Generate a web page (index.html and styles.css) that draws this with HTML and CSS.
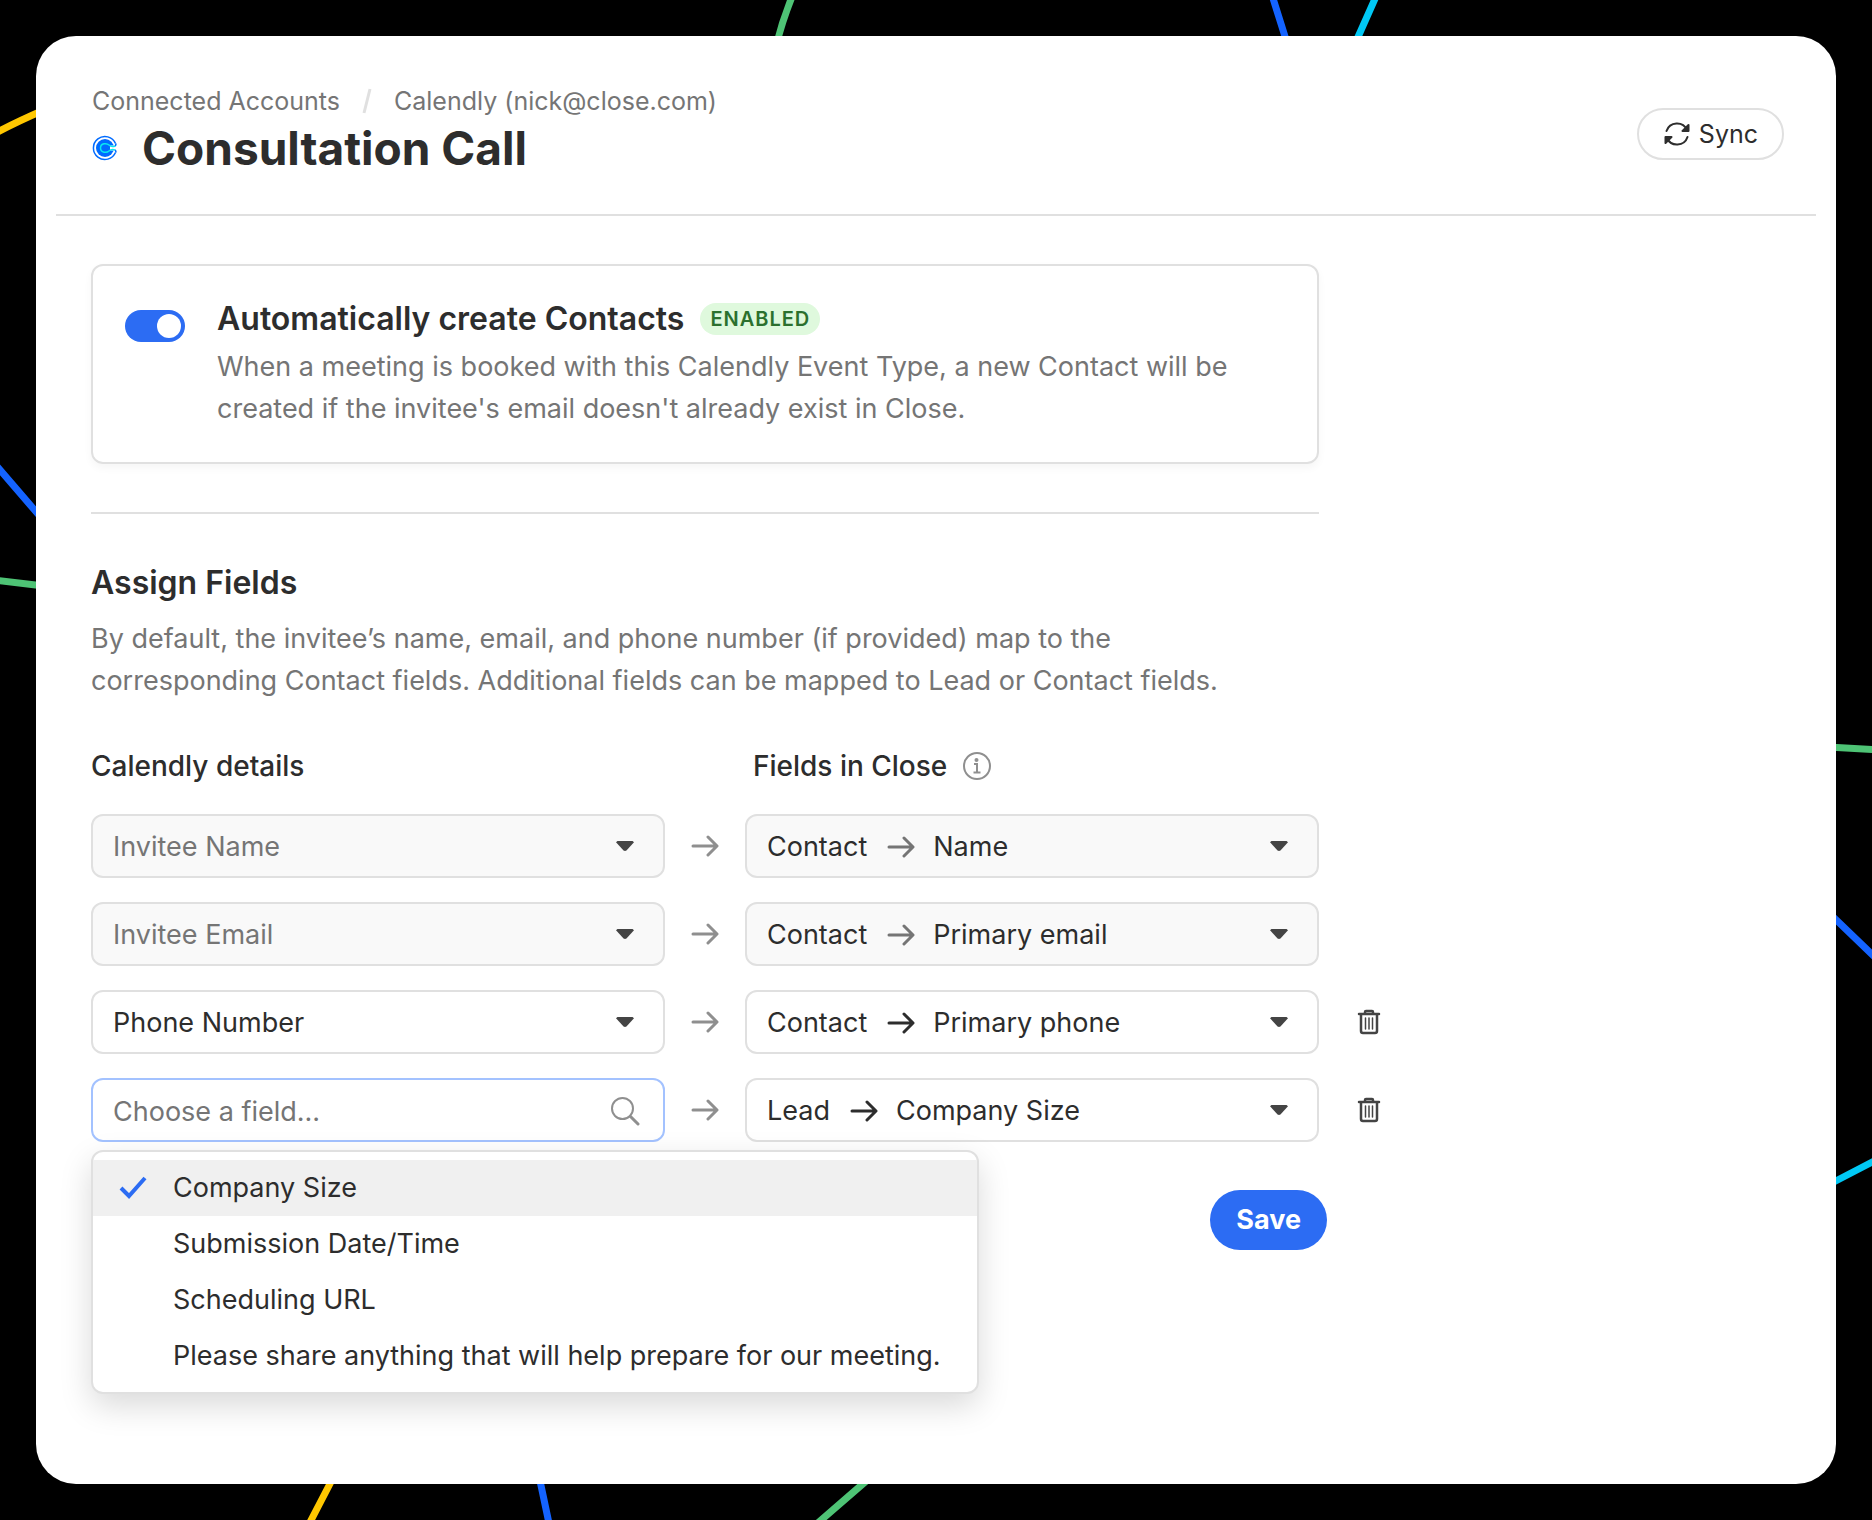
FILE: index.html
```html
<!DOCTYPE html>
<html lang="en">
<head>
    <meta charset="UTF-8">
    <meta name="viewport" content="width=device-width, initial-scale=1.0">
    <title>Consultation Call</title>
    <link rel="stylesheet" href="styles.css">
</head>
<body>
    <svg class="backdrop" viewBox="0 0 1872 1520" preserveAspectRatio="none" aria-hidden="true">
        <g fill="none" stroke-width="7">
            <path stroke="#ffc700" d="M-6 134Q14 123 44 110M334 1476L307 1528"/>
            <path stroke="#1463ff" d="M-6 463L44 521M1271 -8L1288 46M1828 912L1880 962M539 1476L550 1528"/>
            <path stroke="#4ec375" d="M-6 580L44 586M794 -8Q783 18 776 46M1828 747L1880 750M872 1476L812 1528"/>
            <path stroke="#00c8f5" d="M1378 -8L1354 46M1828 1185L1880 1158"/>
        </g>
    </svg>

    <svg width="0" height="0" class="sprite" aria-hidden="true">
        <symbol id="arrow" viewBox="0 0 28 28">
            <path d="M2 14H25M17 5L26 14L17 23" fill="none" stroke="currentColor" stroke-width="3" stroke-linecap="round" stroke-linejoin="round"/>
        </symbol>
        <symbol id="trash" viewBox="0 0 24 26">
            <g fill="none" stroke="currentColor" stroke-linecap="round" stroke-linejoin="round">
                <path stroke-width="2.500" d="M2 5H22M8 5V3Q8 2 9 2H15Q16 2 16 3V5M4 5V22Q4 24 6 24H18Q20 24 20 22V5"/>
                <path stroke-width="1.500" d="M8.500 9V20M12 9V20M15.500 9V20"/>
            </g>
        </symbol>
    </svg>

    <div class="window">
        <header class="header">
            <div>
                <nav class="breadcrumb">
                    <a href="#">Connected Accounts</a>
                    <svg width="10" height="28" viewBox="0 0 10 28"><path d="M8 2L2 26" stroke="#e0e0e0" stroke-width="3"/></svg>
                    <a href="#">Calendly (nick@close.com)</a>
                </nav>
                <div class="title">
                    <svg width="26" height="26" viewBox="0 0 26 26" fill="none">
                        <circle cx="13" cy="13" r="9" fill="#006bff"/>
                        <path d="M23.500 8.500A11.500 11.500 0 1 0 23.500 17.500" stroke="#006bff" stroke-width="1.500"/>
                        <path d="M18 10.500H25V15.500H18Z" fill="#fff"/>
                        <path d="M23.500 10.800C20 12.500 18.500 11.500 17 10C15 8 8.500 7.800 8.500 13S15 18 17 16C18.500 14.500 20 13.500 23.500 15.200" stroke="#0ae8f0" stroke-width="1.500"/>
                        <path d="M23.500 8.500Q24.500 10 23 10.800M23.500 17.500Q24.500 16 23 15.200" stroke="#006bff" stroke-width="1.500"/>
                    </svg>
                    <h1>Consultation Call</h1>
                </div>
            </div>
            <button class="sync" type="button">
                <svg width="28" height="26" viewBox="0 0 28 26" fill="none" stroke="currentColor" stroke-width="2" stroke-linecap="round">
                    <path d="M3.500 10A11 11 0 0 1 24 9M24.500 16A11 11 0 0 1 4 17"/>
                    <path fill="currentColor" stroke-linejoin="round" d="M25.500 4V10H19.500ZM2.500 22V16H8.500Z"/>
                </svg>
                Sync
            </button>
        </header>

        <main class="content">
            <section class="card">
                <input class="toggle" type="checkbox" id="auto-create" checked>
                <div>
                    <div class="card-title">
                        <h2><label for="auto-create">Automatically create Contacts</label></h2>
                        <span class="badge">ENABLED</span>
                    </div>
                    <p>When a meeting is booked with this Calendly Event Type, a new Contact will be created if the invitee's email doesn't already exist in Close.</p>
                </div>
            </section>

            <section class="assign">
                <h2>Assign Fields</h2>
                <p>By default, the invitee’s name, email, and phone number (if provided) map to the corresponding Contact fields. Additional fields can be mapped to Lead or Contact fields.</p>
            </section>

            <form>
                <div class="mapping">
                    <h3 id="calendly-details">Calendly details</h3>
                    <h3 class="close-fields" id="close-fields">
                        Fields in Close
                        <svg width="28" height="28" viewBox="0 0 28 28" fill="none" stroke="#8f8f8f" stroke-width="2">
                            <circle cx="14" cy="14" r="13"/>
                            <path d="M11 12H14V20M10.500 20.500H17.500"/>
                            <circle cx="13.500" cy="8" r="2" fill="#8f8f8f" stroke="none"/>
                        </svg>
                    </h3>

                    <div class="field disabled muted">
                        <select aria-labelledby="calendly-details" disabled><option>Invitee Name</option></select>
                    </div>
                    <svg class="maps-to"><use href="#arrow"/></svg>
                    <div class="field disabled">
                        <label for="field-name">Contact <svg class="arrow"><use href="#arrow"/></svg></label>
                        <select id="field-name" disabled><option>Name</option></select>
                    </div>

                    <div class="field disabled muted">
                        <select aria-labelledby="calendly-details" disabled><option>Invitee Email</option></select>
                    </div>
                    <svg class="maps-to"><use href="#arrow"/></svg>
                    <div class="field disabled">
                        <label for="field-email">Contact <svg class="arrow"><use href="#arrow"/></svg></label>
                        <select id="field-email" disabled><option>Primary email</option></select>
                    </div>

                    <div class="field">
                        <select aria-labelledby="calendly-details"><option>Phone Number</option></select>
                    </div>
                    <svg class="maps-to"><use href="#arrow"/></svg>
                    <div class="field">
                        <label for="field-phone">Contact <svg class="arrow"><use href="#arrow"/></svg></label>
                        <select id="field-phone"><option>Primary phone</option></select>
                    </div>
                    <button class="remove" type="button" aria-label="Remove"><svg width="24" height="26"><use href="#trash"/></svg></button>

                    <div class="field search">
                        <input type="text" placeholder="Choose a field..." aria-labelledby="calendly-details" aria-controls="options">
                        <svg width="30" height="30" viewBox="0 0 30 30" fill="none" stroke="#8f8f8f" stroke-width="2" stroke-linecap="round">
                            <circle cx="12.500" cy="12.500" r="10.500"/>
                            <path stroke-width="3" d="M20.500 20.500L28 28"/>
                        </svg>
                        <ul class="options" id="options" role="listbox">
                            <li role="option" aria-selected="true">
                                <svg width="28" height="28" viewBox="0 0 28 28"><path d="M2 14L10 22L26 4" fill="none" stroke="#2c6cf3" stroke-width="4"/></svg>
                                Company Size
                            </li>
                            <li role="option">Submission Date/Time</li>
                            <li role="option">Scheduling URL</li>
                            <li role="option">Please share anything that will help prepare for our meeting.</li>
                        </ul>
                    </div>
                    <svg class="maps-to"><use href="#arrow"/></svg>
                    <div class="field">
                        <label for="field-size">Lead <svg class="arrow"><use href="#arrow"/></svg></label>
                        <select id="field-size"><option>Company Size</option></select>
                    </div>
                    <button class="remove" type="button" aria-label="Remove"><svg width="24" height="26"><use href="#trash"/></svg></button>
                </div>
                <div class="actions">
                    <button class="save" type="submit">Save</button>
                </div>
            </form>
        </main>
    </div>
</body>
</html>
```

FILE: styles.css
```css
* {
    box-sizing: border-box;
    margin: 0;
    padding: 0;
}
body {
    position: relative;
    min-height: 100vh;
    padding: 36px;
    background: #000;
    color: #2d2d2d;
    font: 27px/42px Inter, "Liberation Sans", sans-serif;
}
input, select, button {
    font: inherit;
    color: inherit;
}
svg {
    flex: none;
    display: block;
}
.backdrop {
    position: absolute;
    top: 0;
    left: 0;
    width: 100%;
    height: 100%;
}
.sprite {
    position: absolute;
}
.window {
    position: relative;
    min-height: calc(100vh - 72px);
    background: #fff;
    border-radius: 40px;
}

/* header */
.header {
    display: flex;
    justify-content: space-between;
    align-items: flex-start;
    margin: 0 20px;
    padding: 44px 32px 40px 36px;
    border-bottom: 2px solid #e0e0e0;
}
.breadcrumb {
    display: flex;
    align-items: center;
    gap: 22px;
    font-size: 25px;
    line-height: 42px;
}
.breadcrumb a {
    color: #757575;
    text-decoration: none;
}
.title {
    display: flex;
    align-items: center;
    gap: 24px;
}
h1 {
    font-size: 46px;
    line-height: 52px;
    font-weight: 700;
}
.sync {
    display: flex;
    align-items: center;
    gap: 8px;
    height: 52px;
    margin-top: 28px;
    padding: 0 24px;
    background: #fff;
    border: 2px solid #e0e0e0;
    border-radius: 26px;
    font-size: 25px;
}

/* content */
.content {
    padding: 48px 55px;
}
h2 {
    font-size: 32px;
    line-height: 50px;
    font-weight: 600;
}
p {
    color: #757575;
}
.card {
    display: flex;
    align-items: flex-start;
    gap: 32px;
    max-width: 1228px;
    padding: 28px 32px 32px;
    border: 2px solid #e0e0e0;
    border-radius: 12px;
    box-shadow: 0 4px 8px rgba(0, 0, 0, 0.04);
}
.card-title {
    display: flex;
    align-items: center;
    gap: 16px;
    margin-bottom: 2px;
}
.badge {
    padding: 0 10px;
    background: #dff9dd;
    border-radius: 16px;
    color: #2b702e;
    font-size: 20px;
    line-height: 32px;
    font-weight: 600;
    letter-spacing: 1px;
}
.toggle {
    flex: none;
    appearance: none;
    width: 60px;
    height: 32px;
    margin-top: 16px;
    padding: 4px;
    background: #2c6cf3;
    border-radius: 16px;
}
.toggle::before {
    content: "";
    display: block;
    width: 24px;
    height: 24px;
    margin-left: auto;
    background: #fff;
    border-radius: 50%;
}
.assign {
    max-width: 1228px;
    margin-top: 48px;
    padding-top: 44px;
    border-top: 2px solid #e0e0e0;
}
.assign h2 {
    margin-bottom: 10px;
}
.assign p {
    max-width: 1150px;
}

/* field mapping */
.mapping {
    display: grid;
    grid-template-columns: 1fr 80px 1fr 100px;
    row-gap: 24px;
    align-items: center;
    max-width: 1328px;
    margin-top: 44px;
}
h3 {
    margin-bottom: 4px;
    font-size: 28px;
    line-height: 40px;
    font-weight: 500;
}
.close-fields {
    grid-column: 3;
    display: flex;
    align-items: center;
    gap: 16px;
    padding-left: 8px;
}
.mapping .field {
    position: relative;
    display: flex;
    align-items: center;
    height: 64px;
    padding: 2px 0 0 20px;
    background: #fff;
    border: 2px solid #e0e0e0;
    border-radius: 12px;
}
.mapping .field:nth-of-type(odd) {
    grid-column: 1;
}
.mapping .field.disabled {
    background: #f9f9f9;
}
.field label {
    display: flex;
    align-items: center;
    gap: 20px;
    padding-right: 18px;
}
.field select {
    flex: 1;
    min-width: 0;
    height: 100%;
    appearance: none;
    background: none;
    border: 0;
    outline: 0;
    opacity: 1;
}
.field:has(select)::after {
    content: "";
    position: absolute;
    top: 25px;
    right: 29px;
    width: 18px;
    height: 10px;
    background: #444;
    clip-path: polygon(8% 0, 92% 0, 100% 12%, 58% 94%, 50% 100%, 42% 94%, 0 12%);
    pointer-events: none;
}
.muted select {
    color: #757575;
}
.arrow, .maps-to {
    width: 28px;
    height: 28px;
}
.maps-to {
    justify-self: center;
    color: #8f8f8f;
}
.disabled .arrow {
    color: #757575;
}
.mapping .search {
    padding-right: 23px;
    border-color: #a3c2ff;
}
.search input {
    flex: 1;
    min-width: 0;
    height: 100%;
    background: none;
    border: 0;
    outline: 0;
}
.search input::placeholder {
    color: #757575;
    opacity: 1;
}
.remove {
    justify-self: center;
    background: none;
    border: 0;
    color: #444;
}
.options {
    position: absolute;
    z-index: 1;
    top: 70px;
    left: -2px;
    width: max-content;
    padding: 8px 0;
    background: #fff;
    border: 2px solid #e0e0e0;
    border-radius: 12px;
    box-shadow: 0 12px 32px rgba(0, 0, 0, 0.15);
    list-style: none;
}
.options li {
    display: flex;
    align-items: center;
    gap: 26px;
    padding: 0 36px 0 80px;
    line-height: 56px;
}
.options li[aria-selected] {
    padding-left: 26px;
    background: #f0f0f0;
}
.actions {
    display: flex;
    justify-content: flex-end;
    max-width: 1236px;
    margin-top: 48px;
}
.save {
    height: 60px;
    padding: 0 26px;
    background: #2c6cf3;
    border: 0;
    border-radius: 30px;
    color: #fff;
    font-weight: 700;
}
```
